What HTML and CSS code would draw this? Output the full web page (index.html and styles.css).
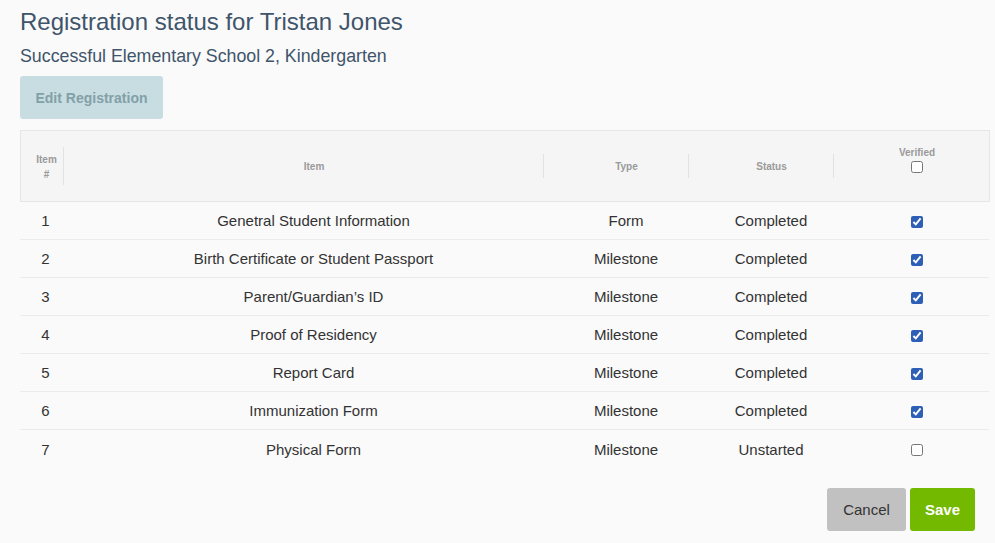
FILE: index.html
```html
<!DOCTYPE html>
<html>
<head>
<meta charset="utf-8">
<link rel="stylesheet" href="styles.css">
</head>
<body>
<div class="page">
  <h1 class="title">Registration status for Tristan Jones</h1>
  <h2 class="subtitle">Successful Elementary School 2, Kindergarten</h2>
  <button class="btn-edit">Edit Registration</button>

  <div class="table">
    <div class="thead">
      <div class="th th-num"><span class="th-label">Item<br>#</span></div>
      <div class="th"><span class="divider divider-tall"></span><span class="th-label">Item</span></div>
      <div class="th"><span class="divider"></span><span class="th-label">Type</span></div>
      <div class="th"><span class="divider"></span><span class="th-label">Status</span></div>
      <div class="th th-last"><span class="divider"></span><span class="th-label th-verified">Verified<input type="checkbox" class="cb"></span></div>
    </div>
    <div class="row"><div class="td td-num">1</div><div class="td">Genetral Student Information</div><div class="td">Form</div><div class="td">Completed</div><div class="td td-last"><input type="checkbox" class="cb" checked></div></div>
    <div class="row"><div class="td td-num">2</div><div class="td">Birth Certificate or Student Passport</div><div class="td">Milestone</div><div class="td">Completed</div><div class="td td-last"><input type="checkbox" class="cb" checked></div></div>
    <div class="row"><div class="td td-num">3</div><div class="td">Parent/Guardian’s ID</div><div class="td">Milestone</div><div class="td">Completed</div><div class="td td-last"><input type="checkbox" class="cb" checked></div></div>
    <div class="row"><div class="td td-num">4</div><div class="td">Proof of Residency</div><div class="td">Milestone</div><div class="td">Completed</div><div class="td td-last"><input type="checkbox" class="cb" checked></div></div>
    <div class="row"><div class="td td-num">5</div><div class="td">Report Card</div><div class="td">Milestone</div><div class="td">Completed</div><div class="td td-last"><input type="checkbox" class="cb" checked></div></div>
    <div class="row"><div class="td td-num">6</div><div class="td">Immunization Form</div><div class="td">Milestone</div><div class="td">Completed</div><div class="td td-last"><input type="checkbox" class="cb" checked></div></div>
    <div class="row row-last"><div class="td td-num">7</div><div class="td">Physical Form</div><div class="td">Milestone</div><div class="td">Unstarted</div><div class="td td-last"><input type="checkbox" class="cb"></div></div>
  </div>

  <div class="footer">
    <button class="btn btn-cancel">Cancel</button>
    <button class="btn btn-save">Save</button>
  </div>
</div>
</body>
</html>
```

FILE: styles.css
```css
html, body {
  margin: 0;
  padding: 0;
  background: #fafafa;
}
body {
  font-family: "Liberation Sans", Arial, Helvetica, sans-serif;
  color: #333;
}
.page {
  padding: 6px 0 0 20px;
  width: 975px;
}
.title {
  margin: 0;
  font-size: 24px;
  line-height: 32px;
  font-weight: normal;
  color: #40546a;
}
.subtitle {
  margin: 6px 0 0 0;
  font-size: 17.8px;
  line-height: 24px;
  font-weight: normal;
  color: #40546a;
}
.btn-edit {
  display: block;
  margin-top: 8px;
  width: 143px;
  height: 43px;
  border: none;
  border-radius: 3px;
  background: #c7dde2;
  color: #83a0a7;
  font-family: inherit;
  font-size: 14px;
  font-weight: bold;
  padding: 0;
}
.table {
  margin-top: 11px;
  width: 970px;
}
.thead, .row {
  display: grid;
  grid-template-columns: 43px 480px 145px 145px 157px;
}
.thead {
  height: 72px;
  box-sizing: border-box;
  background: #f5f5f5;
  border: 1px solid #e6e6e6;
}
.th {
  display: flex;
  align-items: center;
  font-size: 10px;
  font-weight: bold;
  color: #9a9a9a;
  line-height: 15px;
}
.th-num {
  padding-left: 8px;
  padding-top: 2px;
}
.th-label {
  flex: 1;
  text-align: center;
}
.th .divider + .th-label {
  margin-left: 20px;
}
.th-last {
  padding-right: 11px;
}
.divider {
  width: 1px;
  height: 24px;
  background: #e2e2e2;
  margin-left: -1px;
}
.divider-tall {
  height: 38px;
}
.th-verified {
  display: flex;
  flex-direction: column;
  align-items: center;
  gap: 1px;
  margin-top: -14px;
}
.row {
  height: 38px;
  border-bottom: 1px solid #ebebeb;
  box-sizing: border-box;
  width: 969px;
}
.row-last {
  border-bottom: none;
}
.td {
  display: flex;
  align-items: center;
  justify-content: center;
  padding-left: 21px;
  font-size: 15px;
  color: #333;
}
.td-num {
  padding-left: 8px;
}
.td-last {
  padding-right: 11px;
  padding-top: 2px;
}
.cb {
  margin: 0;
  width: 12px;
  height: 12px;
  accent-color: #2c5fb5;
}
.footer {
  display: flex;
  justify-content: flex-end;
  gap: 4px;
  margin-top: 20px;
  padding-right: 20px;
}
.btn {
  height: 43px;
  border: none;
  border-radius: 3px;
  font-family: inherit;
  font-size: 15px;
  padding: 0;
}
.btn-cancel {
  width: 79px;
  background: #c1c1c1;
  color: #333;
}
.btn-save {
  width: 65px;
  background: #72b900;
  color: #fff;
  font-weight: bold;
}
```
